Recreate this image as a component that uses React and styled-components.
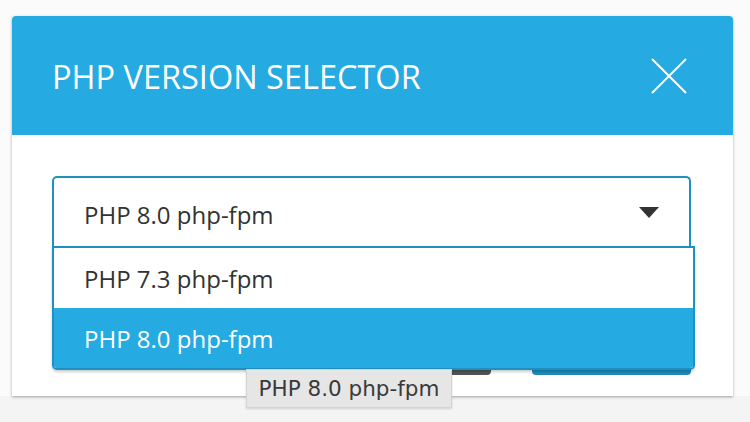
import React from "react";
import styled, { createGlobalStyle } from "styled-components";

const GlobalStyle = createGlobalStyle`
  html, body {
    margin: 0;
    padding: 0;
    background: #f7f7f7;
    font-family: "Open Sans", "Noto Sans", sans-serif;
  }
`;

const Page = styled.div`
  width: 750px;
  height: 422px;
  padding: 16px 0 0 12px;
  box-sizing: border-box;
  overflow: hidden;
  background: linear-gradient(#fbfbfb 0, #fbfbfb 396px, #f4f4f4 396px);
`;

const Modal = styled.div`
  width: 721px;
  background: #fff;
  border-radius: 4px 4px 0 0;
  box-shadow: 0 1px 3px rgba(0, 0, 0, 0.35);
`;

const Header = styled.div`
  height: 119px;
  background: #25aae1;
  border-radius: 4px 4px 0 0;
  display: flex;
  align-items: center;
  justify-content: space-between;
  padding: 0 46px 0 40px;
`;

const Title = styled.h2`
  margin: 0;
  padding-top: 2px;
  color: #fff;
  font-size: 32.5px;
  font-weight: 400;
`;

const CloseButton = styled.button`
  border: 0;
  padding: 0;
  background: none;
  width: 36px;
  height: 36px;
  display: flex;
  cursor: pointer;
`;

const Body = styled.div`
  position: relative;
  height: 261px;
  box-sizing: border-box;
  padding: 41px 42px 0 40px;
`;

const SelectWrap = styled.div`
  position: relative;
  width: 639px;
`;

const SelectBox = styled.div`
  height: 70px;
  box-sizing: border-box;
  border: 2px solid #1e90c1;
  border-bottom: none;
  border-radius: 5px 5px 0 0;
  display: flex;
  align-items: center;
  justify-content: space-between;
  padding: 4px 30px 0 30px;
  color: #333;
  font-size: 24px;
`;

const Caret = styled.span`
  width: 0;
  height: 0;
  border-left: 10px solid transparent;
  border-right: 10px solid transparent;
  border-top: 11px solid #333;
  margin-top: -4px;
`;

const ButtonRow = styled.div`
  display: flex;
  justify-content: flex-end;
  gap: 41px;
  margin-top: 85px;
`;

const Button = styled.button`
  height: 44px;
  width: ${(p) => p.$width}px;
  border: 0;
  border-radius: 4px;
  background: ${(p) => (p.$primary ? "#25aae1" : "#5c5c5c")};
  border-bottom: 7px solid ${(p) => (p.$primary ? "#1e8dbd" : "#555")};
`;

const OptionList = styled.ul`
  position: absolute;
  top: 70px;
  left: 0;
  width: 643px;
  margin: 0;
  padding: 0;
  list-style: none;
  box-sizing: border-box;
  border: 2px solid #1e90c1;
  border-radius: 0 0 5px 5px;
  background: #fff;
  overflow: hidden;
  box-shadow: 0 2px 3px rgba(0, 0, 0, 0.2);
  z-index: 2;
`;

const Option = styled.li`
  height: 60px;
  display: flex;
  align-items: center;
  padding-left: 30px;
  font-size: 24px;
  color: ${(p) => (p.$selected ? "#fff" : "#333")};
  background: ${(p) => (p.$selected ? "#25aae1" : "#fff")};
`;

const Tooltip = styled.div`
  position: absolute;
  left: 234px;
  top: 234px;
  width: 206px;
  height: 39px;
  box-sizing: border-box;
  display: flex;
  align-items: center;
  justify-content: center;
  background: #e6e6e6;
  border: 1px solid #d4d4d4;
  box-shadow: 0 1px 2px rgba(0, 0, 0, 0.15);
  font-family: "DejaVu Sans", sans-serif;
  font-size: 21.5px;
  color: #3a3a3a;
  z-index: 3;
`;

const versions = ["PHP 7.3 php-fpm", "PHP 8.0 php-fpm"];
const current = "PHP 8.0 php-fpm";

export default function App() {
  return (
    <Page>
      <GlobalStyle />
      <Modal>
        <Header>
          <Title>PHP VERSION SELECTOR</Title>
          <CloseButton aria-label="Close">
            <svg width="36" height="36" viewBox="0 0 36 36">
              <path d="M1 1 L35 35 M35 1 L1 35" stroke="#fff" strokeWidth="2" />
            </svg>
          </CloseButton>
        </Header>
        <Body>
          <SelectWrap>
            <SelectBox>
              <span>{current}</span>
              <Caret />
            </SelectBox>
            <OptionList>
              {versions.map((v) => (
                <Option key={v} $selected={v === current}>
                  {v}
                </Option>
              ))}
            </OptionList>
            <ButtonRow>
              <Button $width={140} />
              <Button $primary $width={159} />
            </ButtonRow>
          </SelectWrap>
          <Tooltip>{current}</Tooltip>
        </Body>
      </Modal>
    </Page>
  );
}
